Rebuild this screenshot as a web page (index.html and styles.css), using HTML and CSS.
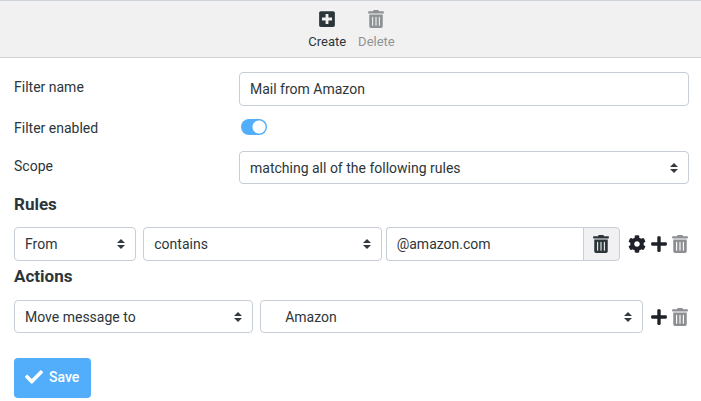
FILE: index.html
```html
<!DOCTYPE html>
<html lang="en">
<head>
    <meta charset="UTF-8">
    <meta name="viewport" content="width=device-width, initial-scale=1.0">
    <title>Filters</title>
    <link rel="stylesheet" href="styles.css">
</head>
<body>
    <svg class="icon-defs" aria-hidden="true">
        <symbol id="icon-create" viewBox="0 0 448 512">
            <path d="M400 32H48C21.5 32 0 53.5 0 80v352c0 26.5 21.5 48 48 48h352c26.5 0 48-21.5 48-48V80c0-26.5-21.5-48-48-48zm-32 252c0 6.600-5.400 12-12 12h-92v92c0 6.600-5.400 12-12 12h-56c-6.600 0-12-5.400-12-12v-92H92c-6.600 0-12-5.400-12-12v-56c0-6.600 5.400-12 12-12h92v-92c0-6.600 5.400-12 12-12h56c6.600 0 12 5.400 12 12v92h92c6.600 0 12 5.400 12 12v56z"/>
        </symbol>
        <symbol id="icon-trash" viewBox="0 0 448 512">
            <path d="M32 464a48 48 0 0 0 48 48h288a48 48 0 0 0 48-48V128H32zm272-256a16 16 0 0 1 32 0v224a16 16 0 0 1-32 0zm-96 0a16 16 0 0 1 32 0v224a16 16 0 0 1-32 0zm-96 0a16 16 0 0 1 32 0v224a16 16 0 0 1-32 0zM432 32H312l-9.400-18.700A24 24 0 0 0 281.100 0H166.800a23.720 23.720 0 0 0-21.400 13.300L136 32H16A16 16 0 0 0 0 48v32a16 16 0 0 0 16 16h416a16 16 0 0 0 16-16V48a16 16 0 0 0-16-16z"/>
        </symbol>
        <symbol id="icon-plus" viewBox="0 0 448 512">
            <path d="M416 208H272V64c0-17.670-14.330-32-32-32h-32c-17.670 0-32 14.330-32 32v144H32c-17.670 0-32 14.330-32 32v32c0 17.670 14.330 32 32 32h144v144c0 17.670 14.330 32 32 32h32c17.670 0 32-14.330 32-32V304h144c17.670 0 32-14.330 32-32v-32c0-17.670-14.330-32-32-32z"/>
        </symbol>
        <symbol id="icon-cog" viewBox="0 0 512 512">
            <path d="M487.400 315.700l-42.600-24.600c4.300-23.200 4.300-47 0-70.200l42.600-24.600c4.900-2.800 7.100-8.600 5.500-14-11.100-35.600-30-67.800-54.700-94.600-3.800-4.100-10-5.100-14.800-2.300L380.800 110c-17.900-15.400-38.500-27.300-60.800-35.100V25.800c0-5.600-3.900-10.500-9.400-11.700-36.700-8.200-74.300-7.800-109.200 0-5.500 1.200-9.400 6.100-9.400 11.700V75c-22.200 7.900-42.800 19.800-60.800 35.100L88.700 85.500c-4.900-2.800-11-1.900-14.800 2.300-24.700 26.700-43.600 58.900-54.700 94.600-1.700 5.400.6 11.200 5.500 14L67.300 221c-4.300 23.200-4.300 47 0 70.200l-42.600 24.600c-4.900 2.800-7.100 8.600-5.500 14 11.100 35.600 30 67.800 54.700 94.600 3.800 4.100 10 5.100 14.800 2.300l42.600-24.600c17.900 15.400 38.500 27.300 60.800 35.100v49.200c0 5.600 3.900 10.500 9.400 11.700 36.700 8.200 74.300 7.800 109.200 0 5.500-1.200 9.400-6.100 9.400-11.700v-49.200c22.200-7.900 42.800-19.800 60.800-35.100l42.600 24.600c4.900 2.800 11 1.900 14.800-2.300 24.700-26.700 43.600-58.900 54.700-94.600 1.500-5.500-.7-11.300-5.600-14.100zM256 336c-44.100 0-80-35.900-80-80s35.900-80 80-80 80 35.900 80 80-35.900 80-80 80z"/>
        </symbol>
        <symbol id="icon-check" viewBox="0 0 512 512">
            <path d="M173.900 439.400l-166.400-166.400c-10-10-10-26.200 0-36.200l36.200-36.200c10-10 26.200-10 36.200 0L192 312.700 432.100 72.600c10-10 26.200-10 36.200 0l36.200 36.200c10 10 10 26.200 0 36.200l-294.400 294.400c-10 10-26.200 10-36.200 0z"/>
        </symbol>
    </svg>

    <header class="toolbar">
        <button type="button" class="tool">
            <svg class="icon"><use href="#icon-create"/></svg>
            Create
        </button>
        <button type="button" class="tool" disabled>
            <svg class="icon"><use href="#icon-trash"/></svg>
            Delete
        </button>
    </header>

    <form class="filter-form">
        <div class="form-row">
            <label for="filterName">Filter name</label>
            <input class="control" type="text" id="filterName" value="Mail from Amazon">
        </div>
        <div class="form-row form-row-switch">
            <label for="filterEnabled">Filter enabled</label>
            <input class="switch" type="checkbox" id="filterEnabled" checked>
        </div>
        <div class="form-row">
            <label for="scope">Scope</label>
            <select class="control" id="scope">
                <option>matching all of the following rules</option>
            </select>
        </div>

        <h2>Rules</h2>
        <div class="rule-row">
            <select class="control" aria-label="Header">
                <option>From</option>
            </select>
            <select class="control rule-operator" aria-label="Operator">
                <option>contains</option>
            </select>
            <div class="input-group">
                <input class="control" type="text" aria-label="Value" value="@amazon.com">
                <button type="button" class="input-clear" aria-label="Clear value">
                    <svg class="icon"><use href="#icon-trash"/></svg>
                </button>
            </div>
            <div class="row-buttons">
                <button type="button" class="icon-button" aria-label="Advanced options">
                    <svg class="icon icon-wide"><use href="#icon-cog"/></svg>
                </button>
                <button type="button" class="icon-button" aria-label="Add rule">
                    <svg class="icon"><use href="#icon-plus"/></svg>
                </button>
                <button type="button" class="icon-button" aria-label="Delete rule" disabled>
                    <svg class="icon"><use href="#icon-trash"/></svg>
                </button>
            </div>
        </div>

        <h2>Actions</h2>
        <div class="rule-row action-row">
            <select class="control" aria-label="Action">
                <option>Move message to</option>
            </select>
            <select class="control action-folder" aria-label="Folder">
                <option>Amazon</option>
            </select>
            <div class="row-buttons">
                <button type="button" class="icon-button" aria-label="Add action">
                    <svg class="icon"><use href="#icon-plus"/></svg>
                </button>
                <button type="button" class="icon-button" aria-label="Delete action" disabled>
                    <svg class="icon"><use href="#icon-trash"/></svg>
                </button>
            </div>
        </div>

        <button type="submit" class="save">
            <svg class="icon icon-wide"><use href="#icon-check"/></svg>
            Save
        </button>
    </form>
</body>
</html>
```
FILE: styles.css
```css
* {
    box-sizing: border-box;
}
body {
    margin: 0;
    font-family: Roboto, sans-serif;
    font-size: 14px;
    line-height: 20px;
    color: #2c363a;
    background: #fff;
}
button, input, select {
    margin: 0;
    font: inherit;
    color: inherit;
}
button {
    padding: 0;
    border: 0;
    background: none;
    cursor: pointer;
}
button:disabled {
    opacity: 0.5;
    cursor: default;
}
.icon-defs {
    display: none;
}
.icon {
    display: block;
    flex: none;
    width: 16px;
    height: 18px;
    fill: currentColor;
}
.icon-wide {
    width: 18px;
}
.toolbar {
    display: flex;
    justify-content: center;
    gap: 12px;
    height: 58px;
    padding-left: 2px;
    border-top: 1px solid #ced4da;
    border-bottom: 1px solid #d0d3d5;
    background: #f1f1f1;
}
.tool {
    display: flex;
    flex-direction: column;
    align-items: center;
    gap: 4px;
    padding-top: 9px;
    font-size: 13px;
}
.filter-form {
    padding: 14px 12px 3px 14px;
}
.form-row {
    display: grid;
    grid-template-columns: 1fr 2fr;
    align-items: center;
}
.form-row label {
    padding-bottom: 4px;
}
.form-row-switch {
    min-height: 45px;
}
.form-row-switch label {
    padding-bottom: 2px;
}
.control {
    width: 100%;
    min-width: 0;
    height: 34px;
    padding: 0 10px;
    border: 1px solid #c8ced5;
    border-radius: 4px;
    background: #fff;
}
select.control {
    appearance: none;
    height: auto;
    min-height: 33px;
    padding-right: 28px;
    /* up and down arrows */
    background: #fff url("data:image/svg+xml,%3Csvg xmlns='http://www.w3.org/2000/svg' viewBox='0 0 4 5'%3E%3Cpath fill='%23343a40' d='M2 0L0 2h4zm0 5L0 3h4z'/%3E%3C/svg%3E") no-repeat right 10px center / 8px 10px;
}
.switch {
    appearance: none;
    width: 26px;
    height: 16px;
    margin: 0 0 4px 2px;
    border-radius: 8px;
    background: #b2b2b2 radial-gradient(circle, #fff 6px, transparent 7px) no-repeat -5px center / 26px 16px;
}
.switch:checked {
    background-color: #52aefb;
    background-position: 5px center;
}
h2 {
    margin: 9px 0 12px;
    font-size: 17px;
    line-height: 22px;
    font-weight: 700;
}
/* column widths include the gap that follows each field */
.rule-row {
    display: grid;
    grid-template-columns: 16fr 30fr 29fr auto;
    padding-right: 1px;
}
.action-row {
    grid-template-columns: 9fr 14fr auto;
}
.rule-row + h2 {
    margin: 4px 0 13px;
}
.rule-row > .control:first-child {
    width: auto;
    margin-right: 7px;
}
.rule-row > .rule-operator {
    width: auto;
    margin-right: 4px;
}
.input-group {
    display: flex;
}
.input-group .control {
    border-right: 0;
    border-radius: 4px 0 0 4px;
}
.input-clear {
    flex: none;
    padding: 0 10px 0 9px;
    border: 1px solid #c8ced5;
    border-radius: 0 4px 4px 0;
    background: #f1f1f3;
}
select.action-folder {
    padding-left: 24px;
}
.row-buttons {
    display: flex;
    align-items: center;
    gap: 5px;
    margin-left: 8px;
}
.icon-button {
    color: #1f2228;
}
.save {
    display: flex;
    align-items: center;
    gap: 6px;
    height: 40px;
    margin-top: 25px;
    padding: 0 12px 2px 11px;
    border-radius: 4px;
    background: #52aefb;
    color: #fff;
    font-weight: 500;
}
```
